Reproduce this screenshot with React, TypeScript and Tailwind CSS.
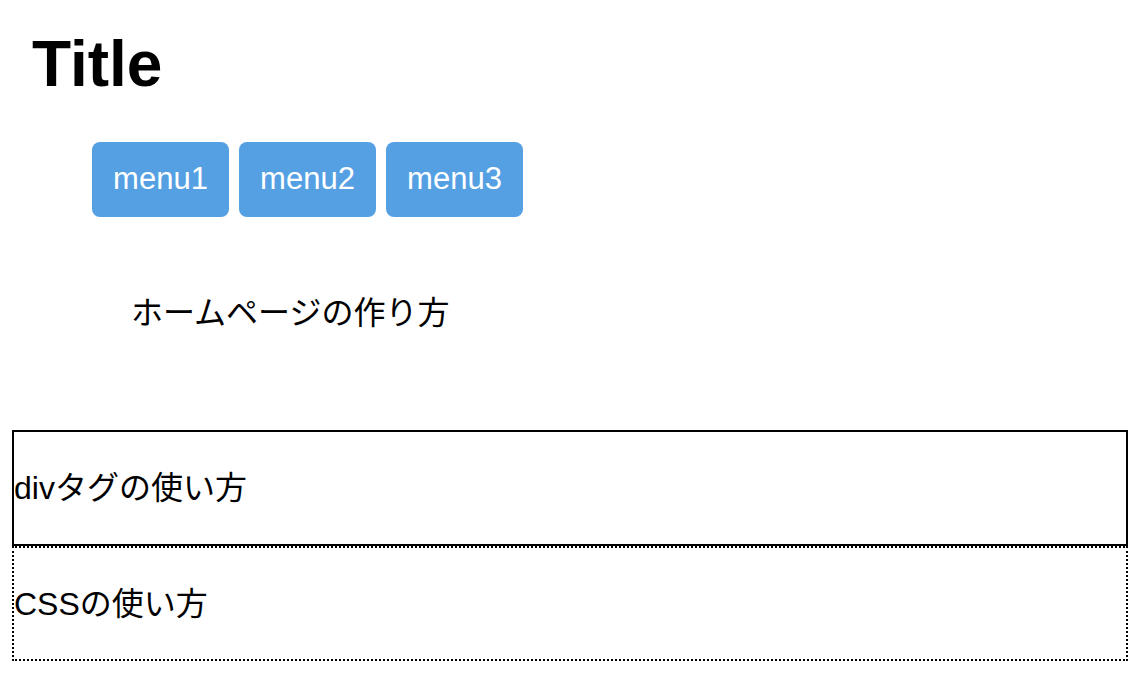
import React from "react";

const MenuButton = ({ label }: { label: string }) => (
  <div className="flex h-[75px] w-[137px] items-center justify-center rounded-[8px] bg-[#55a0e3] text-[31px] text-white">
    {label}
  </div>
);

export default function App() {
  return (
    <div className="min-h-[686px] w-[1142px] bg-white text-black font-['Liberation_Sans','Noto_Sans_CJK_JP',sans-serif]">
      <h1 className="ml-[32px] pt-[32px] text-[64px] font-bold leading-[64px]">Title</h1>

      <div className="ml-[92px] mt-[46px] flex gap-[10px]">
        <MenuButton label="menu1" />
        <MenuButton label="menu2" />
        <MenuButton label="menu3" />
      </div>

      <p className="ml-[131px] mt-[76px] text-[32px] leading-[40px]">ホームページの作り方</p>

      <div className="ml-[12px] mt-[97px] w-[1116px]">
        <div className="flex h-[116px] items-center border-2 border-black text-[32px]">
          divタグの使い方
        </div>
        <div className="flex h-[115px] items-center border-2 border-dotted border-black text-[32px]">
          CSSの使い方
        </div>
      </div>
    </div>
  );
}
